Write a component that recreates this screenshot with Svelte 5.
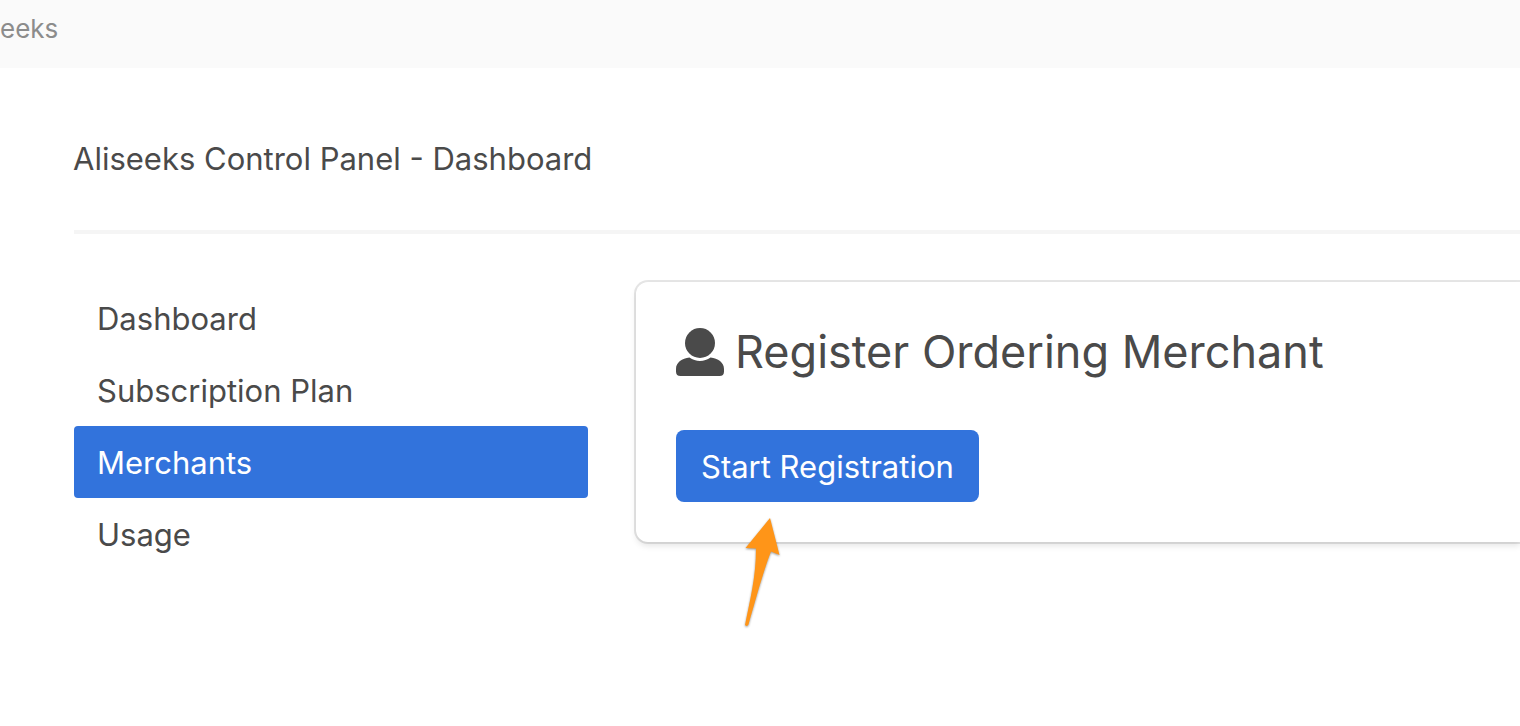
<script>
  let active = $state('Merchants');
  const items = ['Dashboard', 'Subscription Plan', 'Merchants', 'Usage'];
</script>

<header class="topbar"><span class="brand">eeks</span></header>

<main>
  <h1>Aliseeks Control Panel - Dashboard</h1>
  <hr />
  <div class="columns">
    <nav aria-label="Control panel">
      <ul>
        {#each items as item}
          <li>
            <a href="#{item.toLowerCase().replace(' ', '-')}" class:active={active === item} onclick={() => (active = item)}>{item}</a>
          </li>
        {/each}
      </ul>
    </nav>
    <section class="card">
      <h2>
        <svg class="user" viewBox="0 0 48 48" aria-hidden="true">
          <circle cx="24" cy="15" r="15" fill="currentColor" />
          <path fill="currentColor" d="M13.500 29.600C19.500 34.100 28.500 34.100 34.500 29.600C42 30.500 48 34.500 48 41V43.500Q48 48 43.500 48H4.500Q0 48 0 43.500V41C0 34.500 6 30.500 13.500 29.600Z" />
        </svg>
        Register Ordering Merchant
      </h2>
      <div class="action">
        <button type="button">Start Registration</button>
        <svg class="arrow" viewBox="0 0 44 120" aria-hidden="true">
          <path d="M28 3L37.500 40L29 36.500C22 54 13 87 6.500 109.500Q5 112 3 110C8 85 14 62 14 33.500L3.500 33Z" fill="#ff9518" />
        </svg>
      </div>
    </section>
  </div>
</main>

<style>
  :global(body) {
    margin: 0;
    background: #fff;
    color: #4a4a4a;
    font-family: Inter, "Liberation Sans", sans-serif;
    font-size: 31px;
    line-height: 48px;
  }
  .topbar {
    height: 68px;
    box-sizing: border-box;
    padding-top: 5px;
    background: #fafafa;
    color: #8c8c8c;
    font-size: 26px;
  }
  main { padding: 67px 0 120px 73px; }
  h1, h2 { margin: 0; font-weight: 400; }
  h1 { font-size: 31px; }
  hr { height: 4px; margin: 47px 0 48px 1px; border: 0; background: #f5f5f5; }
  .columns { display: grid; grid-template-columns: 514px minmax(0, 1fr); gap: 48px; align-items: start; padding-left: 1px; }
  ul { list-style: none; margin: 0; padding: 0; }
  a { display: block; padding: 13px 23px 11px; border-radius: 4px; color: inherit; text-decoration: none; }
  a.active { background: #3273dc; color: #fff; }
  .card {
    padding: 40px;
    border-radius: 12px 0 0 12px;
    box-shadow: 0 4px 6px rgba(10, 10, 10, 0.1), 0 0 0 2px rgba(10, 10, 10, 0.1);
  }
  h2 { display: flex; align-items: center; gap: 11px; font-size: 45px; line-height: 60px; white-space: nowrap; }
  .user { width: 48px; height: 48px; flex: none; }
  .action { position: relative; margin-top: 48px; }
  button {
    display: block;
    padding: 13px 25px 11px;
    border: 0;
    border-radius: 8px;
    background: #3273dc;
    color: #fff;
    font: inherit;
  }
  .arrow { position: absolute; left: 66px; top: 85px; width: 44px; height: 120px; filter: drop-shadow(0 1px 1px rgba(0, 0, 0, 0.4)); }
</style>
